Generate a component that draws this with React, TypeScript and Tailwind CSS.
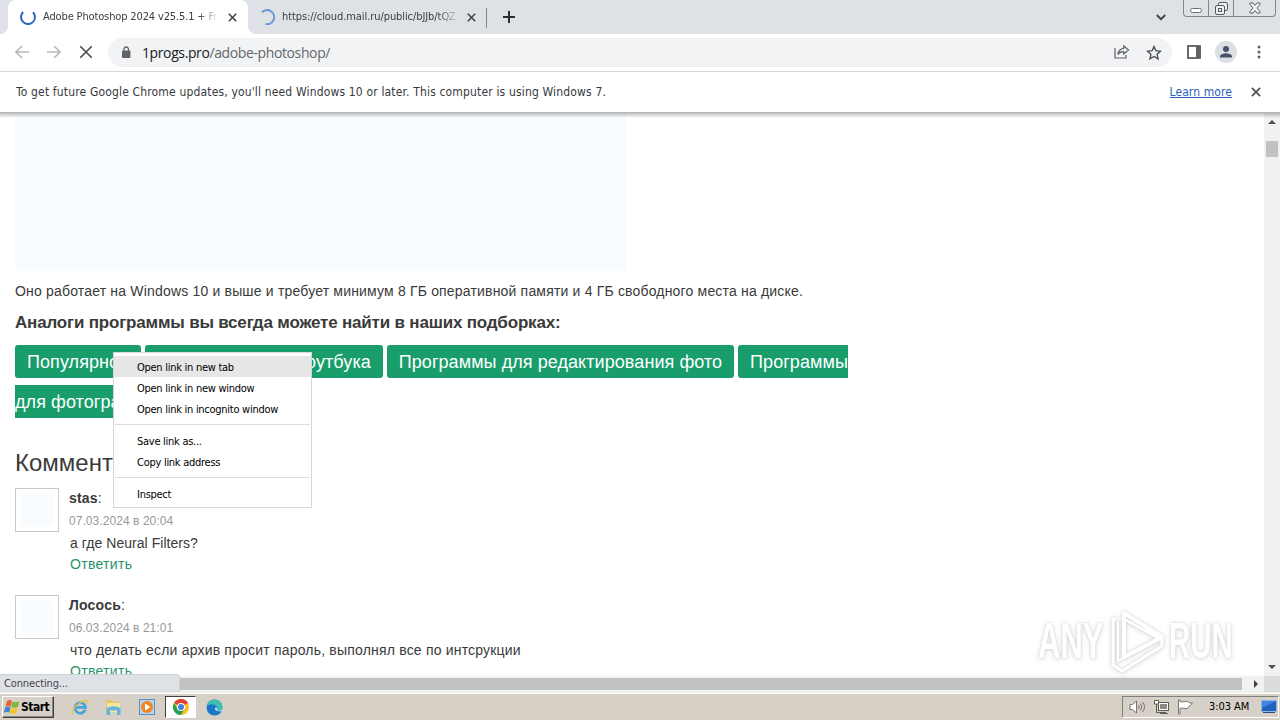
import { ReactNode } from "react";

interface Comment {
  author: string;
  date: string;
  text: string;
}

const comments: Comment[] = [
  { author: "stas", date: "07.03.2024 в 20:04", text: "а где Neural Filters?" },
  { author: "Лосось", date: "06.03.2024 в 21:01", text: "что делать если архив просит пароль, выполнял все по интсрукции" },
];

const tags = ["Популярное", "Программы для ноутбука", "Программы для редактирования фото", "Программы для фотографов"];

const menuGroups = [
  ["Open link in new tab", "Open link in new window", "Open link in incognito window"],
  ["Save link as...", "Copy link address"],
  ["Inspect"],
];

function CloseIcon({ size = 9, color = "#3c4043" }: { size?: number; color?: string }) {
  return (
    <svg width={size} height={size} viewBox="0 0 9 9" className="shrink-0">
      <path d="M.8.8l7.4 7.4M8.2.8L.8 8.2" stroke={color} strokeWidth={size > 12 ? 1.1 : 1.5} />
    </svg>
  );
}

function Tab({ active, title, spinner }: { active?: boolean; title: string; spinner: ReactNode }) {
  return (
    <div className={`flex h-[34px] items-center ${active ? "w-[240px] rounded-t-lg bg-white pl-3" : "w-[238px] pl-[11px]"}`}>
      {spinner}
      <span className={`ml-[7px] overflow-hidden whitespace-nowrap pt-px text-[11px] text-[#3c4043] [mask-image:linear-gradient(to_right,#000_88%,transparent)] ${active ? "w-[176px] tracking-[-0.14px]" : "w-[177px] tracking-[-0.08px]"}`}>
        {title}
      </span>
      <span className={active ? "ml-[9px]" : "ml-[8px]"}>
        <CloseIcon />
      </span>
    </div>
  );
}

function TabStrip() {
  return (
    <div className="flex h-[34px] bg-[#dee1e6]">
      <div className="flex w-2 items-end bg-white">
        <div className="h-full w-2 rounded-br-lg bg-[#dee1e6]" />
      </div>
      <Tab
        active
        title="Adobe Photoshop 2024 v25.5.1 + Fr"
        spinner={
          <svg width="16" height="16" viewBox="0 0 16 16" className="shrink-0">
            <path d="M3.2 3A7 7 0 1 0 13 3.2" fill="none" stroke="#2f66c4" strokeWidth="2" />
          </svg>
        }
      />
      <div className="w-2 bg-white">
        <div className="h-full w-2 rounded-bl-lg bg-[#dee1e6]" />
      </div>
      <div className="-ml-2 flex">
        <Tab
          title="https://cloud.mail.ru/public/bJJb/tQZ"
          spinner={
            <svg width="16" height="16" viewBox="0 0 16 16" className="shrink-0">
              <path d="M3 3.4A7 7 0 1 1 6.5 14.9" fill="none" stroke="#6a94dc" strokeWidth="2" />
            </svg>
          }
        />
      </div>
      <div className="mt-2 h-5 w-px bg-[#85888d]" />
      <svg width="12" height="12" viewBox="0 0 12 12" className="ml-4 mt-[11px]">
        <path d="M6 0v12M0 6h12" stroke="#2b2e33" strokeWidth="2" />
      </svg>
      <svg width="10" height="7" viewBox="0 0 10 7" className="ml-auto mr-[17px] mt-[14px]">
        <path d="M.8 1L5 5.2 9.2 1" fill="none" stroke="#3c4043" strokeWidth="1.8" />
      </svg>
      <div className="mr-[4px] flex h-[17px] w-[93px] rounded-b border border-t-0 border-[#83878d] text-[#5b5f66]">
        <div className="flex w-[25px] justify-center border-r border-[#83878d] pt-[8px]">
          <div className="h-[5px] w-[12px] rounded-sm border border-[#6a6e75] bg-white" />
        </div>
        <div className="flex w-[25px] justify-center border-r border-[#83878d] pt-[2px]">
          <svg width="13" height="13" viewBox="0 0 13 13" fill="none" stroke="#555a61">
            <rect x="3.5" y=".5" width="9" height="8" rx="1.5" fill="#eef0f3" />
            <rect x=".5" y="3.5" width="9" height="9" rx="1.5" fill="#eef0f3" />
            <rect x="3.5" y="6.5" width="3" height="3" />
          </svg>
        </div>
        <div className="flex flex-1 justify-center pt-[2px]">
          <svg width="12" height="12" viewBox="0 0 12 12">
            <path d="M1 1h3l2 2.4L8 1h3v1.4L8 6l3 3.6V11H8L6 8.6 4 11H1V9.6L4 6 1 2.4z" fill="#f4f5f7" stroke="#5b5f66" />
          </svg>
        </div>
      </div>
    </div>
  );
}

function Toolbar() {
  return (
    <div className="flex h-[38px] items-center border-b border-[#d5d7da] bg-white pb-px pl-[15px]">
      <svg width="14" height="14" viewBox="0 0 14 14" fill="none" stroke="#b6b8bb" strokeWidth="1.6">
        <path d="M14 7H1.2M7 1L1 7l6 6" />
      </svg>
      <svg width="14" height="14" viewBox="0 0 14 14" fill="none" stroke="#b6b8bb" strokeWidth="1.6" className="ml-[18px]">
        <path d="M0 7h12.8M7 1l6 6-6 6" />
      </svg>
      <span className="ml-[18px]">
        <CloseIcon size={14} color="#4b4e52" />
      </span>
      <div className="ml-[15px] flex h-[29px] w-[1064px] items-center rounded-full bg-[#f1f3f4] pl-[13px] pr-[10px]">
        <svg width="10" height="13" viewBox="0 0 10 13">
          <rect x="1" y="4.5" width="8.4" height="7.5" rx="1" fill="#5f6368" />
          <path d="M2.9 5V3.3a2.3 2.3 0 0 1 4.6 0V5" fill="none" stroke="#5f6368" strokeWidth="1.3" />
        </svg>
        <span className="ml-[11px] pt-px font-['Open_Sans'] text-[14px] tracking-[-0.39px] text-[#63676b]">
          <span className="text-[#202124]">1progs.pro</span>/adobe-photoshop/
        </span>
        <svg width="16" height="14" viewBox="0 0 16 14" fill="none" stroke="#5f6368" strokeWidth="1.2" className="ml-auto">
          <path d="M1 3v10h11v-3" />
          <path d="M9.7 1l4.8 4-4.8 4V6.7C7 6.7 5.2 7.5 3.8 9.5 4.3 6 6.2 3.7 9.7 3.3z" />
        </svg>
        <svg width="16" height="15" viewBox="0 0 16 15" fill="none" stroke="#4b4e52" strokeWidth="1.4" className="ml-4">
          <path d="M8 1.5l1.9 4.2 4.6.5-3.4 3.1.9 4.5L8 11.5l-4 2.3.9-4.5L1.5 6.2l4.6-.5z" />
        </svg>
      </div>
      <svg width="14" height="14" viewBox="0 0 14 14" className="ml-[15px]">
        <rect x="1" y="1" width="12" height="12" fill="#fff" stroke="#5a5d61" strokeWidth="1.8" />
        <path d="M9 1h4.5v12H9z" fill="#5f6368" />
      </svg>
      <svg width="22" height="22" viewBox="0 0 22 22" className="ml-[14px]">
        <circle cx="11" cy="11" r="11" fill="#dcdfe4" />
        <circle cx="11" cy="8" r="3" fill="#47526b" />
        <path d="M5 16.5v-1.3c0-2 4-3 6-3s6 1 6 3v1.3z" fill="#47526b" />
      </svg>
      <svg width="4" height="14" viewBox="0 0 4 14" fill="#5f6368" className="ml-[20px]">
        <circle cx="2" cy="2" r="1.5" />
        <circle cx="2" cy="7" r="1.5" />
        <circle cx="2" cy="12" r="1.5" />
      </svg>
    </div>
  );
}

function InfoBar() {
  return (
    <div className="flex h-[41px] items-center border-b border-[#b4b5b6] bg-white pl-4 pr-[19px] text-[12px] text-[#37393c]">
      <span className="tracking-[0.16px]">
        To get future Google Chrome updates, you'll need Windows 10 or later. This computer is using Windows 7.
      </span>
      <a className="ml-auto mr-[19px] tracking-[0.1px] text-[#2a62b8] underline">Learn more</a>
      <CloseIcon size={10} color="#4b4e52" />
    </div>
  );
}

function CommentItem({ author, date, text }: Comment) {
  return (
    <div className="flex h-[107px]">
      <div className="h-[44px] w-[44px] shrink-0 border border-[#c9c9c9] p-[5px]">
        <div className="h-full w-full bg-[#f8fcff]" />
      </div>
      <div className="ml-[10px] whitespace-nowrap">
        <div className="h-[22px] text-[14px] leading-[20px] tracking-[0.2px]">
          <b>{author}</b>:
        </div>
        <div className="h-[22px] text-[12px] leading-[22px] tracking-[0.06px] text-[#999]">{date}</div>
        <div className={`ml-px h-[21px] text-[14px] leading-[22px] ${author === "stas" ? "tracking-[0.04px]" : "tracking-[0.19px]"}`}>{text}</div>
        <div className="ml-px text-[14px] leading-[22px] tracking-[0.3px] text-[#2b936c]">Ответить</div>
      </div>
    </div>
  );
}

function ContextMenu() {
  return (
    <div className="absolute left-[113px] top-[352px] w-[199px] border border-[#d5d7d9] bg-white pb-[3px] pt-[3px] text-[11px] tracking-[-0.27px] text-black">
      {menuGroups.map((group, i) => (
        <div key={i} className={i > 0 ? "mx-px mt-[5px] border-t border-[#dcdcdc] pt-[5px]" : ""}>
          {group.map((item, j) => (
            <div key={item} className={`flex h-[21px] items-center pt-[3px] ${i > 0 ? "pl-[22px]" : "pl-[23px]"} ${i === 0 && j === 0 ? "bg-[#e6e6e6]" : ""}`}>
              {item}
            </div>
          ))}
        </div>
      ))}
    </div>
  );
}

function Watermark() {
  return (
    <div className="absolute left-[1038px] top-[608px] flex h-[66px] w-[200px] items-center font-['Liberation_Sans'] text-[50px] font-bold leading-none text-white [filter:drop-shadow(0_0_1px_#d4d4d4)_drop-shadow(0_1px_2px_#e0e0e0)]">
      <span className="w-[68px] origin-left scale-x-[0.62]">ANY</span>
      <svg width="60" height="64" viewBox="0 0 60 64" fill="none" stroke="#fff" strokeWidth="4" strokeLinejoin="round" className="shrink-0">
        <path d="M18 4v44L56 28z" />
        <path d="M11 10H7v46l9 6 40-25v-6L18 10" strokeWidth="3" />
        <path d="M12 12v40l42-22" strokeWidth="2" />
      </svg>
      <span className="ml-[3px] origin-left scale-x-[0.59]">RUN</span>
    </div>
  );
}

function Page() {
  return (
    <div className="flex h-[563px] bg-white">
      <div className="h-full flex-1 overflow-hidden pl-[15px] font-['Liberation_Sans'] text-[#3a3a3a]">
        <div className="h-[157px] w-[611px] bg-[#f8fcff]" />
        <p className="mt-[11px] text-[14px] leading-[20px] tracking-[0.18px]">
          Оно работает на Windows 10 и выше и требует минимум 8 ГБ оперативной памяти и 4 ГБ свободного места на диске.
        </p>
        <p className="mt-[11px] text-[17px] font-bold leading-[22px] tracking-[-0.19px]">
          Аналоги программы вы всегда можете найти в наших подборках:
        </p>
        <div className="mt-[9px] h-[81px] w-[835px] text-[14px] leading-[39px]">
          {tags.map((tag) => (
            <span key={tag}>
              <a className="rounded-[3px] bg-[#189d6b] px-3 pb-[6px] pt-[7px] text-[18px] tracking-[0.07px] text-white">{tag}</a>{" "}
            </span>
          ))}
        </div>
        <h2 className="mt-[24px] text-[24px] leading-[30px]">Комментарии</h2>
        <div className="mt-[10px]">
          {comments.map((c) => (
            <CommentItem key={c.author} {...c} />
          ))}
        </div>
      </div>
      <div className="flex w-4 flex-col items-center bg-[#f1f1f1]">
        <div className="mt-[7px] border-x-4 border-b-4 border-x-transparent border-b-[#505050]" />
        <div className="mt-[17px] h-4 w-3 bg-[#c1c1c1]" />
        <div className="mb-[7px] mt-auto border-x-4 border-t-4 border-x-transparent border-t-[#505050]" />
      </div>
    </div>
  );
}

function HorizontalScrollbar() {
  return (
    <div className="flex h-[17px] items-center bg-[#f1f1f1] pb-px">
      <div className="ml-[17px] h-3 w-[1225px] bg-[#c1c1c1]" />
      <div className="ml-[12px] border-y-4 border-l-4 border-y-transparent border-l-[#404040]" />
      <div className="ml-auto h-full w-4 bg-[#dcdcdc]" />
    </div>
  );
}

function WindowsFlag() {
  return (
    <svg width="17" height="16" viewBox="0 0 17 16">
      <path d="M4 2C6 .5 8 1 9 2L7.8 7.5C6.5 6.5 4.5 6.5 2.5 7.6z" fill="#e8642c" />
      <path d="M9.6 2.4c2 1 4 1 6.7-.2l-1.4 5.5c-2 1.2-4.4 1.2-6.6.2z" fill="#7cb73e" />
      <path d="M2.2 8.3c2-1.2 3.9-1 5.4-.1l-1.3 5.5C5 12.6 3 12.6.8 13.8z" fill="#4487d0" />
      <path d="M8.2 8.7c2 1 4.3 1 6.5-.1l-1.4 5.5c-2 1.2-4.3 1-6.4.1z" fill="#f4c52c" />
    </svg>
  );
}

function Taskbar() {
  return (
    <div className="flex h-[27px] items-center border-t border-white bg-[#d6d0c7]">
      <div className="ml-[2px] flex h-[22px] w-[52px] items-center border border-b-[#404040] border-l-white border-r-[#404040] border-t-white text-[12px] font-bold tracking-[-0.5px] text-black shadow-[inset_-1px_-1px_#8a867f]">
        <WindowsFlag />
        <span className="ml-px">Start</span>
      </div>
      {/* Internet Explorer */}
      <svg width="18" height="18" viewBox="0 0 18 18" fill="none" className="ml-[17px]">
        <path d="M14.3 11.8A5.3 5.3 0 1 1 14.6 9.3H5" stroke="#42a5dc" strokeWidth="2.7" />
        <path d="M3 15.8C-1 16 2 9.5 8 5.5S18 1.5 16.3 5.5" stroke="#ecc33c" strokeWidth="1.4" />
      </svg>
      {/* Explorer */}
      <svg width="18" height="18" viewBox="0 0 18 18" className="ml-[15px]">
        <path d="M2 2h5l1.5 1.5H15V14H2z" fill="#e6c661" />
        <path d="M3 5h13v9H3z" fill="#f8e7a0" />
        <path d="M2.5 10q7-3.5 14 0v7h-3.5v-4.5H6V17H2.5z" fill="#68b4dc" />
      </svg>
      {/* Media player */}
      <svg width="16" height="16" viewBox="0 0 16 16" className="ml-[17px]">
        <rect x=".5" y=".5" width="15" height="15" fill="#b9d5ec" stroke="#5a8fc4" />
        <circle cx="8" cy="8" r="6" fill="#ef8520" />
        <path d="M6 4.5v7L11.5 8z" fill="#fff" />
      </svg>
      <div className="ml-[10px] flex h-[22px] w-[31px] items-center justify-center border border-b-white border-l-[#404040] border-r-white border-t-[#404040] bg-white">
        <svg width="16" height="16" viewBox="0 0 16 16">
          <circle cx="8" cy="8" r="8" fill="#fbc116" />
          <path d="M8 8L1.07 4A8 8 0 0 1 14.93 4z" fill="#dd4435" />
          <path d="M1.07 4A8 8 0 0 0 8 16l3.5-6L8 8 4.6 10z" fill="#25a152" />
          <circle cx="8" cy="8" r="4" fill="#fff" />
          <circle cx="8" cy="8" r="3" fill="#3f7ee8" />
        </svg>
      </div>
      {/* Edge */}
      <svg width="17" height="17" viewBox="0 0 17 17" className="ml-[10px]">
        <circle cx="8.5" cy="8.5" r="8" fill="#1b78c8" />
        <path d="M.7 7A8 8 0 0 1 16.5 8.5c0 2.5-2.5 3.5-5 3-1.5-.5-.5-1.5-.5-2.5C11 6 5 3.5.7 7z" fill="#3cc2b0" />
        <path d="M9.3 8.5C8 11 11 13 16 12l.6-2.5c-1 2-3 2.5-5 2-1.5-.5-.5-1.5-.6-2.5z" fill="#d6e9f2" />
      </svg>
      <div className="ml-auto mr-[1px] flex h-[22px] w-[157px] items-center border border-b-white border-l-[#808080] border-r-white border-t-[#808080] pl-[6px] text-[11px] text-black">
        <svg width="17" height="14" viewBox="0 0 17 14" fill="none" stroke="#77736d">
          <path d="M1 4.5h2.5L7.5 1v12L3.5 9.5H1z" fill="#fff" />
          <path d="M9.5 5q1.5 2 0 4M11.5 3.5q2.5 3.5 0 7M13.5 2q4 5 0 10" />
        </svg>
        <svg width="17" height="16" viewBox="0 0 17 16" fill="none" stroke="#5d5a55" className="ml-[7px]">
          <rect x="5.5" y="3.5" width="10" height="8" fill="#fff" />
          <rect x="7" y="5" width="7" height="5" fill="#8b8983" stroke="none" />
          <path d="M1.5 1.5h4v3.5h-4z" fill="#fff" />
          <path d="M3.5 5v8.5h9.5M7 14.5h8" />
        </svg>
        <svg width="17" height="16" viewBox="0 0 17 16" fill="#fff" stroke="#77736d" className="ml-[7px]">
          <path d="M1.5 1v14h1.5V9.5c3-1.5 4 1 7 0 1.5-.5 2-2.5 5.5-5.5-3 .8-3.5-1.5-6-1.5-2 0-3.5.8-6.5 0V1z" />
        </svg>
        <span className="ml-[15px] pt-px tracking-[-0.05px]">3:03 AM</span>
        <svg width="16" height="14" viewBox="0 0 16 14" className="ml-auto mr-[1px]">
          <rect x=".5" y=".5" width="15" height="11" fill="#2260bd" stroke="#8fb5e2" />
          <path d="M1 1h14L1 8z" fill="#3f86df" />
          <path d="M2 12.5h12" stroke="#2b4d7c" />
        </svg>
      </div>
    </div>
  );
}

export default function App() {
  return (
    <div className="relative h-[720px] w-[1280px] overflow-hidden bg-white font-['DejaVu_Sans_Condensed','DejaVu_Sans',sans-serif]">
      <TabStrip />
      <Toolbar />
      <InfoBar />
      <Page />
      <HorizontalScrollbar />
      <Taskbar />
      <div className="absolute left-0 top-[113px] h-[5px] w-full bg-linear-to-b from-black/25 to-transparent" />
      <ContextMenu />
      <Watermark />
      <div className="absolute left-0 top-[674px] flex h-[18px] w-[180px] items-center rounded-tr border-r border-t border-[#cdd0d4] bg-[#dee1e6] pl-[4px] pt-px text-[11px] tracking-[-0.14px] text-[#45484c]">
        Connecting...
      </div>
    </div>
  );
}
